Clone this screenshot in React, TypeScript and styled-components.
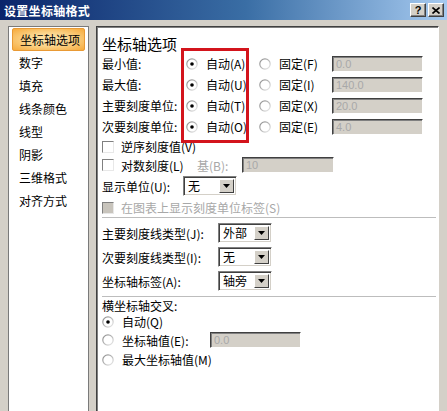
import React from 'react';
import styled, { createGlobalStyle } from 'styled-components';

const GlobalStyle = createGlobalStyle`
  html, body {
    margin: 0;
    padding: 0;
    overflow: hidden;
    background: #d4d0c8;
  }
  body {
    font-family: "Noto Sans CJK SC", "Liberation Sans", sans-serif;
    font-size: 12px;
    color: #000;
  }
`;

const Window = styled.div`
  width: 447px;
  height: 411px;
  display: flex;
  flex-direction: column;
  background: #d4d0c8;
  overflow: hidden;
`;

const TitleBar = styled.div`
  height: 20px;
  flex: none;
  display: flex;
  align-items: center;
  justify-content: space-between;
  padding: 0 3px 0 4px;
  background: linear-gradient(90deg, #0a246a 0%, #3a6ea5 55%, #a6caf0 100%);
`;

const TitleText = styled.span`
  color: #fff;
  font-weight: bold;
  font-size: 12px;
  letter-spacing: 0.3px;
`;

const TitleButtons = styled.div`
  display: flex;
  gap: 2px;
`;

const CaptionButton = styled.div`
  width: 14px;
  height: 12px;
  display: flex;
  align-items: center;
  justify-content: center;
  background: #d4d0c8;
  border-top: 1px solid #fff;
  border-left: 1px solid #fff;
  border-right: 1px solid #404040;
  border-bottom: 1px solid #404040;
  box-shadow: inset -1px -1px 0 #808080;
  font-family: "Liberation Sans", sans-serif;
  font-weight: bold;
  font-size: 11px;
  line-height: 12px;
`;

const Body = styled.div`
  flex: 1;
  display: flex;
  gap: 7px;
  padding: 6px 8px 0 8px;
  min-height: 0;
`;

const Nav = styled.div`
  width: 73px;
  flex: none;
  background: #fff;
  border: 1px solid #7a7a7a;
  border-bottom: none;
  padding: 1px 3px 0 3px;
  display: flex;
  flex-direction: column;
`;

const NavItem = styled.div<{ $active?: boolean }>`
  height: 23px;
  display: flex;
  align-items: center;
  padding-left: 7px;
  white-space: nowrap;
  box-sizing: border-box;
  ${({ $active }) =>
    $active &&
    `
    background: radial-gradient(ellipse at center, #fde7b0 0%, #fbd48a 45%, #f6aa3c 100%);
    border: 1px solid #e99a35;
    border-radius: 2px;
  `}
`;

const Content = styled.div`
  flex: 1;
  position: relative;
  background: #fff;
  border-top: 1px solid #404040;
  border-left: 1px solid #404040;
  border-right: 1px solid #fff;
  box-shadow: inset 1px 1px 0 #808080;
  padding: 0 0 0 5px;
  display: flex;
  flex-direction: column;
`;

const Heading = styled.div`
  font-size: 15px;
  line-height: 18px;
  height: 18px;
  margin-top: 8px;
`;

const OptionsGrid = styled.div`
  position: relative;
  display: grid;
  grid-template-columns: 84px 73px 73px 92px;
  grid-auto-rows: 21px;
  align-items: center;
`;

const Annotation = styled.div`
  position: absolute;
  left: 79px;
  top: -5px;
  width: 62px;
  height: 89px;
  border: 3px solid #d3141c;
  pointer-events: none;
`;

const Cell = styled.div`
  display: flex;
  align-items: center;
  gap: 8px;
  white-space: nowrap;
`;

const Row = styled.div<{ $h: number; $gap?: number }>`
  height: ${({ $h }) => $h}px;
  display: flex;
  align-items: center;
  gap: ${({ $gap }) => $gap ?? 7}px;
  white-space: nowrap;
`;

const Label = styled.span<{ $w?: number; $disabled?: boolean }>`
  ${({ $w }) => ($w ? `width: ${$w}px; flex: none;` : '')}
  color: ${({ $disabled }) => ($disabled ? '#a8a8a8' : '#000')};
`;

const Separator = styled.div<{ $top: number }>`
  height: 0;
  border-top: 1px solid #bdbdbd;
  margin: ${({ $top }) => $top}px 2px 0 0;
`;

const Input = styled.div<{ $w: number }>`
  width: ${({ $w }) => $w}px;
  height: 16px;
  box-sizing: border-box;
  background: #d4d0c8;
  border-top: 1px solid #404040;
  border-left: 1px solid #404040;
  border-right: 1px solid #fff;
  border-bottom: 1px solid #fff;
  box-shadow: inset 1px 1px 0 #808080;
  color: #a8a8a8;
  font-size: 11px;
  line-height: 14px;
  padding-left: 3px;
  font-family: "Liberation Sans", sans-serif;
  flex: none;
`;

const Select = styled.div`
  width: 54px;
  height: 20px;
  box-sizing: border-box;
  display: flex;
  align-items: stretch;
  background: #fff;
  border-top: 1px solid #808080;
  border-left: 1px solid #808080;
  border-right: 1px solid #fff;
  border-bottom: 1px solid #fff;
  box-shadow: inset 1px 1px 0 #404040, inset -1px -1px 0 #d4d0c8;
  flex: none;
`;

const SelectText = styled.span`
  flex: 1;
  padding: 0 0 0 4px;
  line-height: 18px;
  font-size: 12px;
`;

const DropButton = styled.div`
  width: 15px;
  margin: 2px 2px 2px 0;
  box-sizing: border-box;
  background: #d4d0c8;
  border-top: 1px solid #fff;
  border-left: 1px solid #fff;
  border-right: 1px solid #404040;
  border-bottom: 1px solid #404040;
  display: flex;
  align-items: center;
  justify-content: center;
`;

const Radio: React.FC<{ checked?: boolean }> = ({ checked }) => (
  <svg width="12" height="12" viewBox="0 0 12 12" style={{ flex: 'none' }}>
    <defs>
      <linearGradient id="rb" x1="0" y1="0" x2="1" y2="1">
        <stop offset="0" stopColor="#8a8a8a" />
        <stop offset="0.5" stopColor="#b5b5b5" />
        <stop offset="1" stopColor="#eeeeee" />
      </linearGradient>
    </defs>
    <circle cx="6" cy="6" r="5.2" fill="#fff" stroke="url(#rb)" strokeWidth="1.2" />
    {checked && <circle cx="6" cy="6" r="1.8" fill="#000" />}
  </svg>
);

const CheckBox = styled.div<{ $disabled?: boolean }>`
  width: 12px;
  height: 12px;
  box-sizing: border-box;
  flex: none;
  background: ${({ $disabled }) => ($disabled ? '#c8c4bc' : '#fff')};
  border-top: 1px solid #808080;
  border-left: 1px solid #808080;
  border-right: 1px solid #e8e8e8;
  border-bottom: 1px solid #e8e8e8;
`;

const Arrow = () => (
  <svg width="7" height="4" viewBox="0 0 7 4">
    <polygon points="0,0 7,0 3.5,4" fill="#000" />
  </svg>
);

const Dropdown: React.FC<{ value: string }> = ({ value }) => (
  <Select>
    <SelectText>{value}</SelectText>
    <DropButton>
      <Arrow />
    </DropButton>
  </Select>
);

const navItems = ['坐标轴选项', '数字', '填充', '线条颜色', '线型', '阴影', '三维格式', '对齐方式'];

const bounds = [
  { label: '最小值:', auto: '自动(A)', fixed: '固定(F)', value: '0.0' },
  { label: '最大值:', auto: '自动(U)', fixed: '固定(I)', value: '140.0' },
  { label: '主要刻度单位:', auto: '自动(T)', fixed: '固定(X)', value: '20.0' },
  { label: '次要刻度单位:', auto: '自动(O)', fixed: '固定(E)', value: '4.0' },
];

const tickRows = [
  { label: '主要刻度线类型(J):', value: '外部' },
  { label: '次要刻度线类型(I):', value: '无' },
  { label: '坐标轴标签(A):', value: '轴旁' },
];

export default function App() {
  return (
    <Window>
      <GlobalStyle />
      <TitleBar>
        <TitleText>设置坐标轴格式</TitleText>
        <TitleButtons>
          <CaptionButton>?</CaptionButton>
          <CaptionButton>
            <svg width="8" height="7" viewBox="0 0 8 7">
              <path d="M0.5 0.5 L7.5 6.5 M7.5 0.5 L0.5 6.5" stroke="#000" strokeWidth="1.6" />
            </svg>
          </CaptionButton>
        </TitleButtons>
      </TitleBar>
      <Body>
        <Nav>
          {navItems.map((item, i) => (
            <NavItem key={item} $active={i === 0}>
              {item}
            </NavItem>
          ))}
        </Nav>
        <Content>
          <Heading>坐标轴选项</Heading>
          <OptionsGrid>
            {bounds.map((b) => (
              <React.Fragment key={b.label}>
                <Cell>{b.label}</Cell>
                <Cell>
                  <Radio checked />
                  <span>{b.auto}</span>
                </Cell>
                <Cell>
                  <Radio />
                  <span>{b.fixed}</span>
                </Cell>
                <Cell>
                  <Input $w={91}>{b.value}</Input>
                </Cell>
              </React.Fragment>
            ))}
            <Annotation />
          </OptionsGrid>
          <Row $h={19}>
            <CheckBox />
            <span>逆序刻度值(V)</span>
          </Row>
          <Row $h={18}>
            <CheckBox />
            <Label $w={69}>对数刻度(L)</Label>
            <Label $w={38} $disabled>
              基(B):
            </Label>
            <Input $w={92}>10</Input>
          </Row>
          <Row $h={24} $gap={0}>
            <Label $w={81}>显示单位(U):</Label>
            <Dropdown value="无" />
          </Row>
          <Row $h={19}>
            <CheckBox $disabled />
            <Label $disabled>在图表上显示刻度单位标签(S)</Label>
          </Row>
          <Separator $top={0} />
          <div style={{ height: 3 }} />
          {tickRows.map((r) => (
            <Row key={r.label} $h={24} $gap={0}>
              <Label $w={116}>{r.label}</Label>
              <Dropdown value={r.value} />
            </Row>
          ))}
          <Separator $top={3} />
          <Row $h={17}>
            <span>横坐标轴交叉:</span>
          </Row>
          <Row $h={15} $gap={8}>
            <Radio checked />
            <span>自动(Q)</span>
          </Row>
          <Row $h={22} $gap={8}>
            <Radio />
            <Label $w={80}>坐标轴值(E):</Label>
            <Input $w={91}>0.0</Input>
          </Row>
          <Row $h={17} $gap={8}>
            <Radio />
            <span>最大坐标轴值(M)</span>
          </Row>
        </Content>
      </Body>
    </Window>
  );
}
